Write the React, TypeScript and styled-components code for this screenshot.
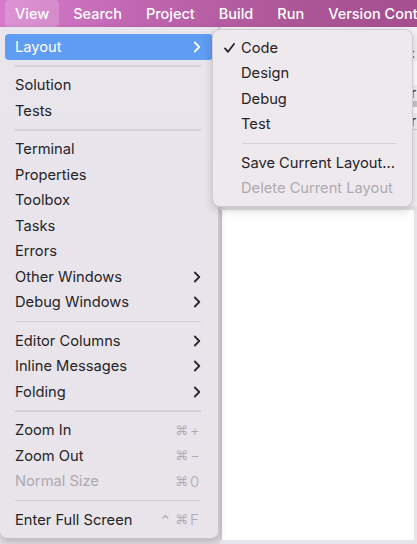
import React from "react";
import styled, { createGlobalStyle } from "styled-components";

const Global = createGlobalStyle`
  html, body { margin: 0; padding: 0; }
  body {
    width: 417px; height: 544px; overflow: hidden;
    background: #dedce1;
    font-family: Inter, "Liberation Sans", sans-serif;
    -webkit-font-smoothing: antialiased;
  }
`;

const Screen = styled.div`
  width: 417px;
  height: 544px;
  display: flex;
  flex-direction: column;
  overflow: hidden;
`;

const MenuBar = styled.div`
  height: 27px;
  flex: none;
  display: flex;
  align-items: stretch;
  padding-left: 5px;
  overflow: hidden;
  background: linear-gradient(90deg, #d67bcc 0%, #bf65af 35%, #ad5697 70%, #a64f90 100%);
`;

const BarItem = styled.div<{ $active?: boolean }>`
  display: flex;
  align-items: center;
  padding: 0 10px;
  margin-right: 4px;
  color: #fff;
  font-size: 14.5px;
  font-weight: 500;
  border-radius: 4px;
  background: ${(p) => (p.$active ? "rgba(255,255,255,0.18)" : "transparent")};
  white-space: nowrap;
  flex: none;
`;

const Workspace = styled.div`
  position: relative;
  flex: 1;
  display: flex;
`;

const LeftPane = styled.div`
  width: 220px;
  flex: none;
  background: #dcdadf;
`;

const RightPane = styled.div`
  flex: 1;
  display: flex;
  flex-direction: column;
  background: #e6e4e8;
`;

const Toolbar = styled.div`
  height: 179px;
  flex: none;
  background: #f3f2f3;
  display: flex;
  flex-direction: column;
  align-items: flex-end;
  padding-top: 18px;
  box-sizing: border-box;
`;

const ToolChar = styled.div`
  width: 6px;
  font-size: 14px;
  line-height: 16px;
  color: #333;
  overflow: hidden;
`;

const ToolRow = styled.div<{ $h: number; $bg: string }>`
  width: 6px;
  height: ${(p) => p.$h}px;
  background: ${(p) => p.$bg};
`;

const WhitePanel = styled.div`
  flex: 1;
  margin: 4px 3px 4px 0;
  background: #ffffff;
  border-left: 2px solid #cfcdd2;
`;

const Menu = styled.div`
  position: absolute;
  left: 0;
  top: 0;
  width: 219px;
  box-sizing: border-box;
  padding: 7px 5px 5px 5px;
  background: linear-gradient(180deg, #e9e5ec 0%, #e8e4ea 100%);
  border-right: 1px solid #c9c6cc;
  border-bottom: 1px solid #c4c1c7;
  border-radius: 0 0 8px 8px;
  box-shadow: 1px 2px 6px rgba(0, 0, 0, 0.18);
`;

const SubMenu = styled.div`
  position: absolute;
  left: 212px;
  top: 2px;
  width: 201px;
  box-sizing: border-box;
  padding: 5px;
  background: #eee9ed;
  border: 1px solid #cfcbd0;
  border-radius: 8px;
  box-shadow: 0 3px 10px rgba(0, 0, 0, 0.18);
`;

const Row = styled.div<{ $active?: boolean; $disabled?: boolean }>`
  height: 25.5px;
  display: flex;
  align-items: center;
  padding: 0 12px 0 10px;
  border-radius: 4px;
  font-size: 14.7px;
  color: ${(p) => (p.$active ? "#ffffff" : p.$disabled ? "#aeaab1" : "#262427")};
  background: ${(p) => (p.$active ? "#5f9cf3" : "transparent")};
  white-space: nowrap;
`;

const SubRow = styled(Row)`
  padding: 0 8px 0 6px;
`;

const CheckBox = styled.span`
  width: 17px;
  flex: none;
  display: flex;
  align-items: center;
`;

const Label = styled.span`
  flex: 1;
`;

const Separator = styled.div`
  height: 13px;
  display: flex;
  align-items: center;
  padding: 0 12px 0 10px;
  &::after {
    content: "";
    flex: 1;
    height: 1.5px;
    background: #d4d0d7;
  }
`;

const SubSeparator = styled(Separator)`
  padding: 0 11px 0 24px;
`;

const Shortcut = styled.span`
  display: flex;
  align-items: center;
  color: #b0acb3;
  font-family: "DejaVu Sans", Inter, sans-serif;
`;

const Modifier = styled.span`
  width: 15px;
  font-size: 13px;
`;

const Caret = styled.span`
  width: 16px;
  font-size: 15px;
  margin-top: 2px;
`;

const KeyCap = styled.span`
  width: 11px;
  font-family: Inter, sans-serif;
  font-size: 15px;
  font-weight: 300;
`;

const Chevron = ({ color }: { color: string }) => (
  <svg width="8" height="12" viewBox="0 0 8 12" style={{ flex: "none" }}>
    <path d="M1.8 1.5 L6.3 6 L1.8 10.5" fill="none" stroke={color} strokeWidth="1.8" strokeLinecap="round" strokeLinejoin="round" />
  </svg>
);

const CheckIcon = () => (
  <svg width="11" height="10" viewBox="0 0 11 10">
    <path d="M1 5.4 L4 8.8 L10 1" fill="none" stroke="#262427" strokeWidth="1.8" strokeLinecap="round" strokeLinejoin="round" />
  </svg>
);

type Item =
  | { sep: true }
  | { label: string; sub?: boolean; active?: boolean; disabled?: boolean; ctrl?: boolean; key?: string };

const items: Item[] = [
  { label: "Layout", sub: true, active: true },
  { sep: true },
  { label: "Solution" },
  { label: "Tests" },
  { sep: true },
  { label: "Terminal" },
  { label: "Properties" },
  { label: "Toolbox" },
  { label: "Tasks" },
  { label: "Errors" },
  { label: "Other Windows", sub: true },
  { label: "Debug Windows", sub: true },
  { sep: true },
  { label: "Editor Columns", sub: true },
  { label: "Inline Messages", sub: true },
  { label: "Folding", sub: true },
  { sep: true },
  { label: "Zoom In", key: "+" },
  { label: "Zoom Out", key: "−" },
  { label: "Normal Size", disabled: true, key: "0" },
  { sep: true },
  { label: "Enter Full Screen", ctrl: true, key: "F" },
];

type SubItem = { sep: true } | { label: string; checked?: boolean; disabled?: boolean };

const subItems: SubItem[] = [
  { label: "Code", checked: true },
  { label: "Design" },
  { label: "Debug" },
  { label: "Test" },
  { sep: true },
  { label: "Save Current Layout..." },
  { label: "Delete Current Layout", disabled: true },
];

export default function App() {
  return (
    <Screen>
      <Global />
      <MenuBar>
        <BarItem $active>View</BarItem>
        <BarItem>Search</BarItem>
        <BarItem>Project</BarItem>
        <BarItem>Build</BarItem>
        <BarItem>Run</BarItem>
        <BarItem>Version Control</BarItem>
      </MenuBar>
      <Workspace>
        <LeftPane />
        <RightPane>
          <Toolbar>
            <ToolChar>:</ToolChar>
            <ToolRow $h={24} $bg="#ffffff" />
            <ToolChar>r</ToolChar>
            <ToolRow $h={6} $bg="#c9c8ca" />
            <ToolRow $h={6} $bg="#ffffff" />
            <ToolChar>r</ToolChar>
            <ToolRow $h={1} $bg="#d0d0d0" />
          </Toolbar>
          <WhitePanel />
        </RightPane>

        <Menu>
          {items.map((it, i) =>
            "sep" in it ? (
              <Separator key={i} />
            ) : (
              <Row key={i} $active={it.active} $disabled={it.disabled}>
                <Label>{it.label}</Label>
                {it.sub && <Chevron color={it.active ? "#ffffff" : "#2a282b"} />}
                {it.key && (
                  <Shortcut>
                    {it.ctrl && <Caret>⌃</Caret>}
                    <Modifier>⌘</Modifier>
                    <KeyCap>{it.key}</KeyCap>
                  </Shortcut>
                )}
              </Row>
            )
          )}
        </Menu>

        <SubMenu>
          {subItems.map((it, i) =>
            "sep" in it ? (
              <SubSeparator key={i} />
            ) : (
              <SubRow key={i} $disabled={it.disabled}>
                <CheckBox>{it.checked && <CheckIcon />}</CheckBox>
                <Label>{it.label}</Label>
              </SubRow>
            )
          )}
        </SubMenu>
      </Workspace>
    </Screen>
  );
}
